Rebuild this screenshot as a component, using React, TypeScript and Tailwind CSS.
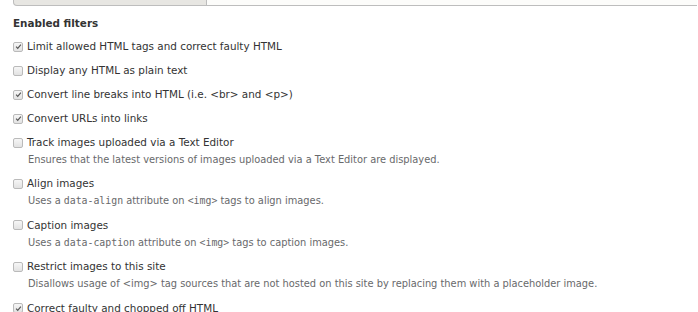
const filters = [
  { label: "Limit allowed HTML tags and correct faulty HTML", checked: true },
  { label: "Display any HTML as plain text", checked: false },
  { label: "Convert line breaks into HTML (i.e. <br> and <p>)", checked: true },
  { label: "Convert URLs into links", checked: true },
  {
    label: "Track images uploaded via a Text Editor",
    checked: false,
    description: (
      <>Ensures that the latest versions of images uploaded via a Text Editor are displayed.</>
    ),
  },
  {
    label: "Align images",
    checked: false,
    description: (
      <>
        Uses a <code className="font-['DejaVu_Sans_Mono',monospace]">data-align</code> attribute on{" "}
        <code className="font-['DejaVu_Sans_Mono',monospace]">&lt;img&gt;</code> tags to align images.
      </>
    ),
  },
  {
    label: "Caption images",
    checked: false,
    description: (
      <>
        Uses a <code className="font-['DejaVu_Sans_Mono',monospace]">data-caption</code> attribute on{" "}
        <code className="font-['DejaVu_Sans_Mono',monospace]">&lt;img&gt;</code> tags to caption images.
      </>
    ),
  },
  {
    label: "Restrict images to this site",
    checked: false,
    description: (
      <>
        Disallows usage of &lt;img&gt; tag sources that are not hosted on this site by replacing them
        with a placeholder image.
      </>
    ),
  },
  { label: "Correct faulty and chopped off HTML", checked: true },
];

function Checkbox({ checked }: { checked: boolean }) {
  return (
    <span className="flex h-[10px] w-[10px] shrink-0 items-center justify-center rounded-[2px] border border-[#bababa] bg-gradient-to-b from-[#f6f6f6] to-[#e2e2e2]">
      {checked && (
        <svg viewBox="0 0 10 10" className="h-[7px] w-[7px]">
          <path d="M1.6 5.2 L3.9 7.6 L8.4 2.2" fill="none" stroke="#555" strokeWidth="1.7" />
        </svg>
      )}
    </span>
  );
}

export default function App() {
  return (
    <div className="h-[312px] w-[698px] overflow-hidden bg-white font-['DejaVu_Sans',sans-serif] text-[#333]">
      <div className="flex h-[6px] pr-[1px]">
        <div className="ml-[13px] w-[194px] rounded-bl-[4px] border-b border-l border-r border-[#bdbdbd] bg-[#e7e6e2]" />
        <div className="flex-1 border-b border-[#bdbdbd] bg-[#fcfcfa]" />
      </div>

      <div className="px-[13px]">
        <h3 className="mt-[9px] h-[17px] text-[10.4px] font-bold leading-[17px]">Enabled filters</h3>

        <ul className="mt-[6px] flex flex-col gap-[7px]">
          {filters.map((f) => (
            <li key={f.label} className="flex flex-col">
              <label className="flex h-[17px] items-center gap-[4px] text-[10.4px] leading-[17px]">
                <Checkbox checked={f.checked} />
                <span>{f.label}</span>
              </label>
              {f.description && (
                <div className="ml-[15px] h-[17.4px] text-[9.85px] leading-[17.4px] text-[#68696b]">
                  {f.description}
                </div>
              )}
            </li>
          ))}
        </ul>
      </div>
    </div>
  );
}
